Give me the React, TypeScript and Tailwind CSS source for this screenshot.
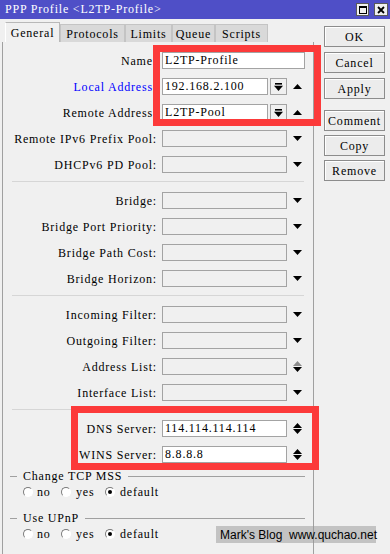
import type { ReactNode } from "react";

const font = "font-['Liberation_Serif',serif] text-[12px] tracking-[0.8px]";

function DownTri({ gray = false }: { gray?: boolean }) {
  return (
    <svg width="9" height="5" viewBox="0 0 9 5">
      <path d="M0 0h9L4.5 5z" fill={gray ? "#8c8c8c" : "#000"} />
    </svg>
  );
}

function UpTri({ gray = false }: { gray?: boolean }) {
  return (
    <svg width="9" height="5" viewBox="0 0 9 5">
      <path d="M0 5h9L4.5 0z" fill={gray ? "#8c8c8c" : "#000"} />
    </svg>
  );
}

function Field({ value, white, className }: { value?: string; white?: boolean; className: string }) {
  return (
    <div
      className={`h-[17px] border border-[#a3a3a3] pl-[2px] leading-[15px] ${white ? "bg-white" : "bg-[#f0f0f0]"} ${className}`}
    >
      {value}
    </div>
  );
}

type Kind = "none" | "down" | "select" | "updown" | "addr";

function Row({
  label,
  value,
  kind = "down",
  blue,
  white,
}: {
  label: string;
  value?: string;
  kind?: Kind;
  blue?: boolean;
  white?: boolean;
}) {
  return (
    <div className="flex h-[17px] items-center">
      <div className={`w-[154px] text-right ${blue ? "text-[#0000ff]" : "text-black"}`}>{label}:</div>
      {kind === "none" && <Field value={value} white={white} className="ml-[5px] w-[143px]" />}
      {kind === "select" && (
        <>
          <Field value={value} white={white} className="ml-[5px] w-[106px]" />
          <div className="ml-[2px] flex h-[17px] w-[17px] items-center justify-center border border-[#a3a3a3] bg-[#f0f0f0]">
            <svg width="9" height="8" viewBox="0 0 9 8">
              <rect x="1" y="0" width="7" height="1.6" fill="#000" />
              <path d="M0 2.8h9L4.5 8z" fill="#000" />
            </svg>
          </div>
          <div className="ml-[6px] flex w-[9px] items-center">
            <UpTri />
          </div>
        </>
      )}
      {(kind === "down" || kind === "updown" || kind === "addr") && (
        <>
          <Field value={value} white={white} className="ml-[5px] w-[125px]" />
          <div className="ml-[6px] flex w-[9px] flex-col items-center gap-[1px]">
            {kind === "down" && <DownTri />}
            {kind === "updown" && (
              <>
                <UpTri />
                <DownTri />
              </>
            )}
            {kind === "addr" && (
              <>
                <UpTri gray />
                <DownTri />
              </>
            )}
          </div>
        </>
      )}
    </div>
  );
}

function Section({ children, last }: { children: ReactNode; last?: boolean }) {
  return (
    <div className={`mx-[9px] flex flex-col gap-[9px] pt-[10px] pb-[8px] ${last ? "" : "border-b border-[#d6d6d6]"}`}>
      <div className="-mx-[9px] flex flex-col gap-[9px]">{children}</div>
    </div>
  );
}

function Radio({ checked }: { checked?: boolean }) {
  return (
    <div className="flex h-[10px] w-[10px] items-center justify-center rounded-full border border-[#7a7a7a] border-r-white border-b-white bg-white">
      {checked && <div className="h-[4px] w-[4px] rounded-full bg-black" />}
    </div>
  );
}

function Group({ title, top }: { title: string; top: string }) {
  return (
    <div className={top}>
      <div className="flex h-[12px] items-center">
        <div className="ml-[7px] w-[7px] border-t border-[#a0a0a0]" />
        <div className="ml-[6px] leading-[12px]">{title}</div>
        <div className="mr-[8px] ml-[6px] flex-1 border-t border-[#a0a0a0]" />
      </div>
      <div className="mt-[4px] flex h-[12px] items-center pl-[20px] leading-[12px]">
        <div className="flex w-[38px] items-center">
          <Radio />
          <span className="ml-[4px]">no</span>
        </div>
        <div className="flex w-[44px] items-center">
          <Radio />
          <span className="ml-[5px]">yes</span>
        </div>
        <div className="flex items-center">
          <Radio checked />
          <span className="ml-[5px]">default</span>
        </div>
      </div>
    </div>
  );
}

function Btn({ children }: { children: ReactNode }) {
  return (
    <div className="flex h-[21px] w-[61px] items-center justify-center border border-[#8c8c8c] bg-[#ececec] shadow-[inset_1px_1px_0_#ffffff]">
      {children}
    </div>
  );
}

const tabs = [
  { name: "General", w: "w-[55px]", active: true },
  { name: "Protocols", w: "w-[65px]" },
  { name: "Limits", w: "w-[47px]" },
  { name: "Queue", w: "w-[43px]" },
  { name: "Scripts", w: "w-[53px]" },
];

export default function App() {
  return (
    <div className={`relative h-[554px] w-[390px] overflow-hidden bg-[#f0f0f0] text-black ${font}`}>
      {/* Title bar */}
      <div className="flex h-[19px] items-center bg-[#4f4fc7] pl-[5px] text-white">
        <span className="leading-[19px]">PPP Profile &lt;L2TP-Profile&gt;</span>
        <div className="ml-auto mr-[2px] flex items-center gap-[5px]">
          <div className="flex h-[13px] w-[13px] items-center justify-center border border-[#5a5a5a] bg-[#f0f0f0]">
            <div className="h-[8px] w-[8px] border border-black border-t-2" />
          </div>
          <div className="flex h-[13px] w-[14px] items-center justify-center border border-[#5a5a5a] bg-[#f0f0f0]">
            <svg width="8" height="8" viewBox="0 0 8 8">
              <path d="M1 1l6 6M7 1l-6 6" stroke="#000" strokeWidth="1.8" />
            </svg>
          </div>
        </div>
      </div>

      <div className="flex">
        {/* Left: tabs + panel */}
        <div className="w-[314px]">
          <div className="mt-[3px] flex h-[20px] items-end pl-[5px]">
            {tabs.map((t) => (
              <div
                key={t.name}
                className={`flex items-center justify-center border border-b-0 ${t.w} ${
                  t.active
                    ? "h-[20px] border-[#b8b8b8] border-l-white bg-[#f0f0f0]"
                    : "h-[18px] border-[#c4c4c4] bg-[#d9d9d9]"
                }`}
              >
                {t.name}
              </div>
            ))}
          </div>
          <div className="ml-[2px] h-[512px] w-[312px] border-x border-[#a0a0a0]">
            <Section>
              <Row label="Name" value="L2TP-Profile" kind="none" white />
              <Row label="Local Address" value="192.168.2.100" kind="select" blue white />
              <Row label="Remote Address" value="L2TP-Pool" kind="select" white />
              <Row label="Remote IPv6 Prefix Pool" />
              <Row label="DHCPv6 PD Pool" />
            </Section>
            <Section>
              <Row label="Bridge" />
              <Row label="Bridge Port Priority" />
              <Row label="Bridge Path Cost" />
              <Row label="Bridge Horizon" />
            </Section>
            <Section>
              <Row label="Incoming Filter" />
              <Row label="Outgoing Filter" />
              <Row label="Address List" kind="addr" />
              <Row label="Interface List" />
            </Section>
            <Section last>
              <Row label="DNS Server" value="114.114.114.114" kind="updown" white />
              <Row label="WINS Server" value="8.8.8.8" kind="updown" white />
            </Section>
            <Group title="Change TCP MSS" top="mt-[-1px]" />
            <Group title="Use UPnP" top="mt-[14px]" />
          </div>
        </div>

        {/* Right: buttons */}
        <div className="ml-[10px] mt-[7px] flex flex-col">
          <div className="flex flex-col gap-[5px]">
            <Btn>OK</Btn>
            <Btn>Cancel</Btn>
            <Btn>Apply</Btn>
          </div>
          <div className="mt-[11px] flex flex-col gap-[4px]">
            <Btn>Comment</Btn>
            <Btn>Copy</Btn>
            <Btn>Remove</Btn>
          </div>
        </div>
      </div>

      {/* Annotation boxes */}
      <div className="pointer-events-none absolute left-[153px] top-[45px] h-[81px] w-[168px] border-[7px] border-[#fc3a3a]" />
      <div className="pointer-events-none absolute left-[71px] top-[406px] h-[64px] w-[248px] border-[7px] border-[#fc3a3a]" />

      {/* Watermark */}
      <div className="absolute left-[216px] top-[526px] flex h-[17px] w-[160px] items-center bg-[rgba(150,150,150,0.5)] pl-[4px] font-['Liberation_Sans',sans-serif] text-[12px] tracking-normal whitespace-pre">
        Mark's Blog  www.quchao.net
      </div>
    </div>
  );
}
